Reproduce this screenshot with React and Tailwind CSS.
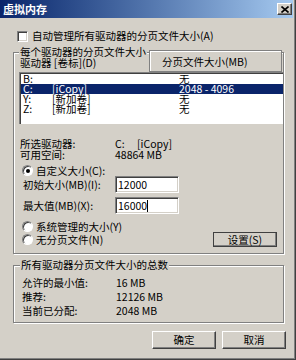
import React from "react";

const DRIVES = [
  { letter: "B:", label: "", size: "无" },
  { letter: "C:", label: "[iCopy]", size: "2048 - 4096", selected: true },
  { letter: "Y:", label: "[新加卷]", size: "无" },
  { letter: "Z:", label: "[新加卷]", size: "无" },
];

const TOTALS = [
  ["允许的最小值:", "16 MB"],
  ["推荐:", "12126 MB"],
  ["当前已分配:", "2048 MB"],
];

// classic win2k bevels
const raised =
  "border border-t-white border-l-white border-r-[#404040] border-b-[#404040] shadow-[inset_-1px_-1px_0_#808080]";
const sunken =
  "border border-t-[#808080] border-l-[#808080] border-r-white border-b-white shadow-[inset_1px_1px_0_#404040,inset_-1px_-1px_0_#d4d0c8]";
const etched = "border border-[#808080] shadow-[1px_1px_0_#fff,inset_1px_1px_0_#fff]";

const Radio = ({ checked, children }) => (
  <div className="flex items-center gap-[3px] h-full">
    <span className="w-[11px] h-[11px] rounded-full bg-white border border-t-[#808080] border-l-[#808080] border-r-white border-b-white shadow-[inset_1px_1px_0_#404040] flex items-center justify-center">
      {checked && <span className="w-[4px] h-[4px] rounded-full bg-black" />}
    </span>
    <span>{children}</span>
  </div>
);

const Field = ({ label, value, caret }) => (
  <div className="flex items-center h-[17px] pl-[9px]">
    <span className="w-[92px]">{label}</span>
    <div className={`w-[64px] h-[17px] bg-white flex items-center pl-[2px] ${sunken}`}>
      <span>{value}</span>
      {caret && <span className="w-px h-[12px] bg-black" />}
    </div>
  </div>
);

export default function App() {
  return (
    <div className="w-[296px] h-[360px] bg-[#d4d0c8] flex flex-col text-black text-[10.5px] leading-[10px] font-['Noto_Sans_CJK_SC',sans-serif] shadow-[inset_-1px_-1px_0_#404040,inset_-2px_-2px_0_#808080]">
      {/* title bar */}
      <div className="h-[18px] mr-[3px] flex items-center pl-[3px] pr-[1px] bg-linear-to-r from-[#0a246a] to-[#a6caf0]">
        <span className="text-white font-bold text-[11px] leading-[12px]">虚拟内存</span>
        <button className={`ml-auto w-[15px] h-[12px] bg-[#d4d0c8] flex items-center justify-center ${raised}`}>
          <svg width="8" height="7" viewBox="0 0 8 7">
            <path d="M0.5 0.5 L7.5 6.5 M7.5 0.5 L0.5 6.5" stroke="#000" strokeWidth="1.6" />
          </svg>
        </button>
      </div>

      <div className="mt-[12px] ml-[17px] h-[12px] flex items-center gap-[4px]">
        <span className={`w-[11px] h-[11px] bg-white ${sunken}`} />
        <span>自动管理所有驱动器的分页文件大小(A)</span>
      </div>

      {/* per-drive group */}
      <div className={`relative mt-[10px] ml-[13px] w-[271px] h-[202px] flex flex-col ${etched}`}>
        <span className="absolute -top-[6px] left-[5px] px-[1px] bg-[#d4d0c8]">每个驱动器的分页文件大小</span>
        <div className="-mt-[3px] h-[22px] flex items-center pr-px">
          <span className="pl-[6px] pt-[4px]">驱动器 [卷标](D)</span>
          <div className="ml-auto w-[133px] h-full border border-[#808080] shadow-[inset_1px_1px_0_#fff] bg-[#d4d0c8] flex items-center pl-[12px] pt-[1px]">
            分页文件大小(MB)
          </div>
        </div>
        <div className="ml-[5px] w-[264px] h-[52px] bg-white border-t border-l border-[#808080] shadow-[inset_1px_1px_0_#404040] pt-px pl-[1px]">
          {DRIVES.map((d) => (
            <div
              key={d.letter}
              className={`h-[10px] flex items-center ${d.selected ? "bg-[#0a246a] text-white" : ""}`}
            >
              <span className="w-[31px] pl-[2px]">{d.letter}</span>
              <span className="w-[127px]">{d.label}</span>
              <span>{d.size}</span>
            </div>
          ))}
        </div>

        <div className="mt-[14px] pl-[6px] flex flex-col">
          <div className="h-[11px] flex items-center">
            <span className="w-[95px]">所选驱动器:</span>
            <span className="w-[22px]">C:</span>
            <span>[iCopy]</span>
          </div>
          <div className="h-[11px] flex items-center">
            <span className="w-[95px]">可用空间:</span>
            <span>48864 MB</span>
          </div>
        </div>

        <div className="mt-[5px] h-[11px] pl-[8px]">
          <Radio checked>自定义大小(C):</Radio>
        </div>
        <Field label="初始大小(MB)(I):" value="12000" />
        <div className="mt-[4px]">
          <Field label="最大值(MB)(X):" value="16000" caret />
        </div>
        <div className="mt-[7px] h-[11px] pl-[8px]">
          <Radio>系统管理的大小(Y)</Radio>
        </div>
        <div className="h-[15px] pl-[8px] pr-[6px] flex items-center justify-between">
          <Radio>无分页文件(N)</Radio>
          <button className={`w-[64px] h-[15px] bg-[#d4d0c8] flex items-center justify-center outline outline-[#404040] -outline-offset-1 ${raised}`}>
            设置(S)
          </button>
        </div>
      </div>

      {/* totals group */}
      <div className={`relative mt-[11px] ml-[13px] w-[271px] h-[58px] pt-[10px] pl-[8px] flex flex-col ${etched}`}>
        <span className="absolute -top-[6px] left-[6px] px-[1px] bg-[#d4d0c8]">所有驱动器分页文件大小的总数</span>
        {TOTALS.map(([k, v]) => (
          <div key={k} className="h-[14px] flex items-center">
            <span className="w-[94px]">{k}</span>
            <span>{v}</span>
          </div>
        ))}
      </div>

      <div className="mt-[8px] flex justify-end gap-[6px] pr-[10px]">
        <button className={`w-[64px] h-[18px] bg-[#d4d0c8] flex items-center justify-center ${raised}`}>确定</button>
        <button className={`w-[64px] h-[18px] bg-[#d4d0c8] flex items-center justify-center ${raised}`}>取消</button>
      </div>
    </div>
  );
}
